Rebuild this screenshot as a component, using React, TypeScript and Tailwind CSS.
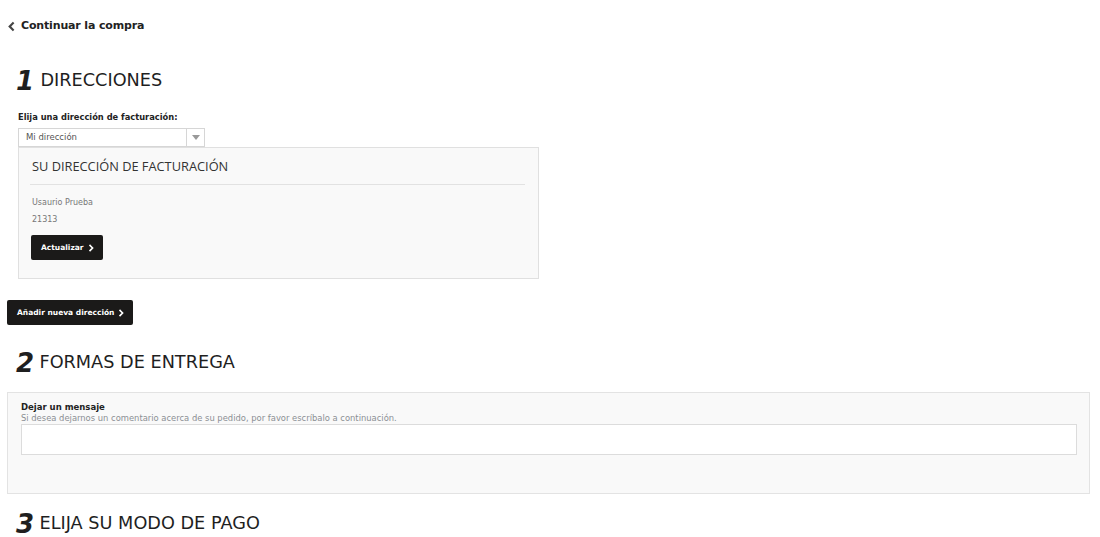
import React from "react";

const font = { fontFamily: '"DejaVu Sans", "Open Sans", sans-serif' };

function Chevron({ className = "", left = false }: { className?: string; left?: boolean }) {
  return (
    <svg className={className} viewBox="0 0 10 10" fill="none" stroke="currentColor" strokeWidth={2.4} strokeLinecap="square">
      <path d={left ? "M6.5 1.5L3 5L6.5 8.5" : "M3 1.5L6.5 5L3 8.5"} />
    </svg>
  );
}

function StepHeading({ n, label, gap = "ml-[7px]" }: { n: string; label: string; gap?: string }) {
  return (
    <div className="flex items-center h-[26px] text-[#1f1f1f]">
      <span className="text-[26px] font-bold italic leading-none tracking-tight -ml-[2px]">{n}</span>
      <span className={`${gap} text-[17.7px] leading-none`}>{label}</span>
    </div>
  );
}

export default function App() {
  return (
    <div className="bg-white min-h-[537px] w-[1100px] px-[7px] pt-[18px] text-[#222]" style={font}>
      <a href="#" className="flex items-center h-4 text-[11px] font-semibold text-[#222]">
        <Chevron left className="w-[9px] h-[11px] text-[#444]" />
        <span className="ml-[5px] tracking-[-0.15px]">Continuar la compra</span>
      </a>

      <div className="mt-[34px] ml-[11px]">
        <StepHeading n="1" label="DIRECCIONES" gap="ml-[7px]" />
      </div>

      <div className="ml-[11px] mt-[17px]">
        <p className="text-[8.3px] leading-[12px] font-semibold text-[#222]">Elija una dirección de facturación:</p>
        <div className="mt-[5px] flex h-[19px] w-[187px] border border-[#d6d6d6] bg-white">
          <span className="flex-1 pl-[7px] text-[8.5px] leading-[17px] text-[#555]">Mi dirección</span>
          <span className="w-[18px] border-l border-[#d6d6d6] flex items-center justify-center">
            <svg width="8" height="5" viewBox="0 0 8 5"><path d="M0 0h8L4 5z" fill="#999" /></svg>
          </span>
        </div>
        <div className="w-[521px] border border-[#e0e0e0] bg-[#f9f9f9] px-[11px] pt-[10px] pb-[18px]">
          <h3 className="ml-[2px] text-[12.8px] leading-4 text-[#333] font-['Open_Sans',sans-serif]">SU DIRECCIÓN DE FACTURACIÓN</h3>
          <div className="mt-[10px] mr-[2px] h-px bg-[#e2e2e2]" />
          <p className="mt-[12px] ml-[2px] text-[8px] leading-[12px] text-[#777]">Usaurio Prueba</p>
          <p className="mt-[5px] ml-[2px] text-[8px] leading-[12px] text-[#777]">21313</p>
          <button className="mt-[9px] ml-px flex items-center h-[25px] w-[72px] pl-[10px] bg-[#1b1a19] text-white text-[7.5px] font-semibold rounded-[2px]">
            Actualizar
            <Chevron className="ml-[4px] w-[7px] h-[8px]" />
          </button>
        </div>
      </div>

      <button className="mt-[21px] flex items-center h-[25px] w-[126px] pl-[10px] bg-[#1b1a19] text-white text-[7.5px] font-semibold rounded-[2px] whitespace-nowrap">
        Añadir nueva dirección
        <Chevron className="ml-[4px] w-[7px] h-[8px]" />
      </button>

      <div className="mt-[25px] ml-[11px]">
        <StepHeading n="2" label="FORMAS DE ENTREGA" gap="ml-[6px]" />
      </div>

      <div className="mt-[16px] w-[1083px] border border-[#e3e3e3] bg-[#f9f9f9] pl-[13px] pr-[12px] pt-[9px] pb-[38px]">
        <p className="text-[8.5px] leading-[11px] font-semibold text-[#222]">Dejar un mensaje</p>
        <p className="text-[8.4px] leading-[11px] text-[#8b8f94]">Si desea dejarnos un comentario acerca de su pedido, por favor escríbalo a continuación.</p>
        <textarea className="block w-full h-[31px] border border-[#dcdcdc] bg-white resize-none" />
      </div>

      <div className="mt-[17px] ml-[11px]">
        <StepHeading n="3" label="ELIJA SU MODO DE PAGO" gap="ml-[6px]" />
      </div>
    </div>
  );
}
